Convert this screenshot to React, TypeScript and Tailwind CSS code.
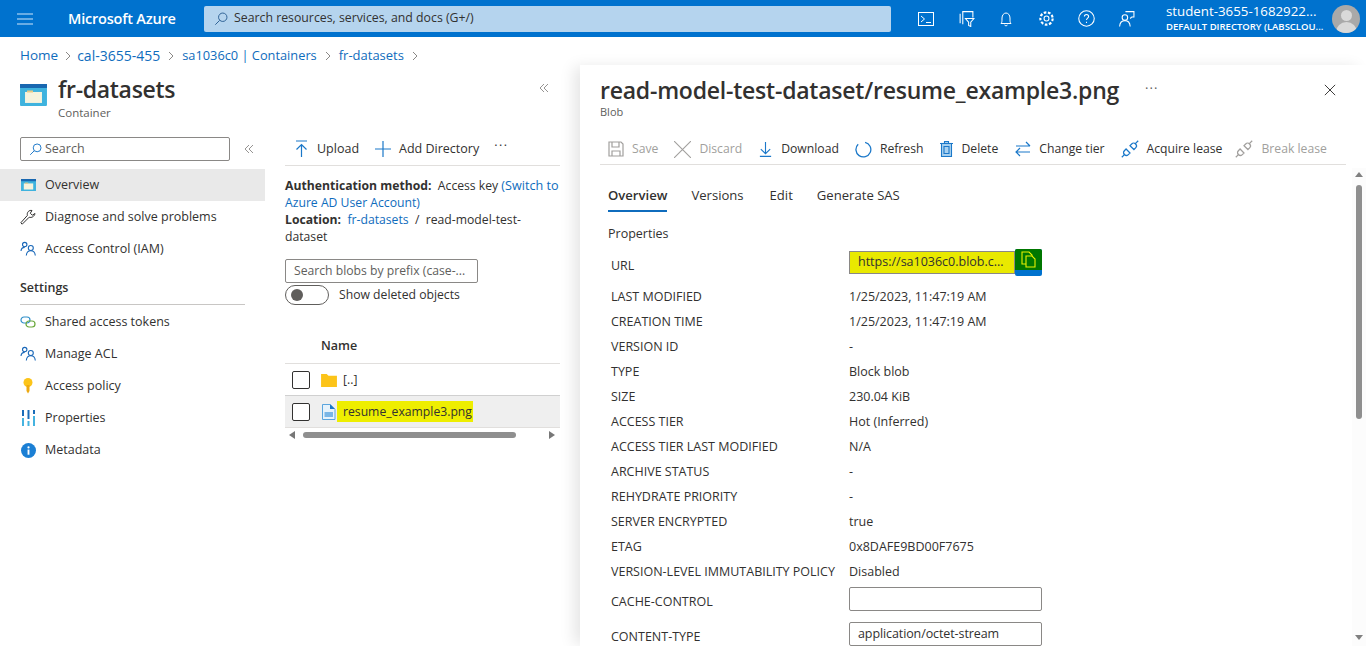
import React from "react";

const LINK = "text-[#0f6cbd]";
const font = { fontFamily: '"Open Sans", "Noto Sans", sans-serif' };

function Stroke({ size = 16, children, color = "#fff", sw = 1 }: { size?: number; children: React.ReactNode; color?: string; sw?: number }) {
  return (
    <svg width={size} height={size} viewBox="0 0 16 16" fill="none" stroke={color} strokeWidth={sw} className="shrink-0">
      {children}
    </svg>
  );
}

function ContainerIcon({ size = 16 }: { size?: number }) {
  return (
    <svg width={size} height={size * 0.85} viewBox="0 0 27 23" className="shrink-0">
      <rect x="0" y="0" width="27" height="22" rx="1" fill="#3fb3de" />
      <rect x="0" y="0" width="27" height="4" fill="#1967b0" />
      <rect x="5" y="8" width="17" height="11" fill="#f6f3dd" />
      <rect x="7" y="6.5" width="6" height="2" fill="#e9c984" />
    </svg>
  );
}

function PeopleIcon() {
  return (
    <Stroke size={16} color="#1967b8" sw={1.1}>
      <circle cx="4.7" cy="3.6" r="2.2" />
      <circle cx="10.8" cy="7" r="2.5" />
      <path d="M1 10c.2-2.2 1.6-3.6 3.7-3.6" />
      <path d="M6.3 14.5c.3-3 2-4.7 4.5-4.7s4.2 1.7 4.500 4.700" />
    </Stroke>
  );
}

function Collapse() {
  return (
    <svg width="10" height="10" viewBox="0 0 10 10" fill="none" stroke="#8a8886" strokeWidth="0.9" className="shrink-0">
      <path d="M5 1L1 5l4 4M9 1L5 5l4 4" />
    </svg>
  );
}

function NavItem({ icon, label, active }: { icon: React.ReactNode; label: string; active?: boolean }) {
  return (
    <div className={`h-8 flex items-center pl-5 gap-[9px] text-[12.5px] text-[#323130] ${active ? "bg-[#e9e9e9]" : ""}`}>
      <span className="w-4 h-4 flex items-center justify-center shrink-0">{icon}</span>
      <span>{label}</span>
    </div>
  );
}

function ToolItem({ icon, label, off, className = "" }: { icon: React.ReactNode; label: string; off?: boolean; className?: string }) {
  return (
    <div className={`flex items-center gap-2 text-[12.2px] ${off ? "text-[#a19f9d]" : "text-[#323130]"} ${className}`}>
      {icon}
      <span>{label}</span>
    </div>
  );
}

function Plug({ color }: { color: string }) {
  return (
    <Stroke size={18} color={color} sw={1.1}>
      <path d="M.7 15.300l3-3M12.300 3.700l3-3" />
      <path d="M3 9.5l1.500-1.500 3.500 3.500L6.500 13C5.500 14 4 14 3 13s-1-2.500 0-3.500z" />
      <path d="M8 5l1.500-1.500c1-1 2.500-1 3.500 0s1 2.500 0 3.500L11.500 8.500z" />
    </Stroke>
  );
}

const rows: [string, string][] = [
  ["LAST MODIFIED", "1/25/2023, 11:47:19 AM"],
  ["CREATION TIME", "1/25/2023, 11:47:19 AM"],
  ["VERSION ID", "-"],
  ["TYPE", "Block blob"],
  ["SIZE", "230.04 KiB"],
  ["ACCESS TIER", "Hot (Inferred)"],
  ["ACCESS TIER LAST MODIFIED", "N/A"],
  ["ARCHIVE STATUS", "-"],
  ["REHYDRATE PRIORITY", "-"],
  ["SERVER ENCRYPTED", "true"],
  ["ETAG", "0x8DAFE9BD00F7675"],
  ["VERSION-LEVEL IMMUTABILITY POLICY", "Disabled"],
];

function Sep({ first }: { first?: boolean }) {
  return (
    <span className={`${first ? "w-[19px]" : "w-[22px]"} flex justify-center shrink-0`}>
      <svg width="6" height="10" viewBox="0 0 6 10" fill="none" stroke="#8a8886" strokeWidth="1"><path d="M1 1l4 4-4 4" /></svg>
    </span>
  );
}

function HeadIcon({ children }: { children: React.ReactNode }) {
  return <span className="w-10 flex justify-center items-center">{children}</span>;
}

function Header() {
  return (
    <header className="h-[37px] bg-[#0072ce] flex items-center text-white shrink-0">
      <div className="w-[49px] flex justify-center">
        <svg width="16" height="12" viewBox="0 0 16 12" stroke="#cfe6fa" strokeWidth="1.2"><path d="M0 1h16M0 6h16M0 11h16" /></svg>
      </div>
      <div className="w-[155px] pl-[19px] text-[14.5px] tracking-[-0.2px] font-semibold whitespace-nowrap">Microsoft Azure</div>
      <div className="w-[687px] h-[26px] bg-[#b5d4ee] rounded-[2px] flex items-center pl-[10px] gap-[6px] text-[12.3px] text-[#323130]">
        <svg width="14" height="14" viewBox="0 0 16 16" fill="none" stroke="#2b5f93" strokeWidth="1.1"><circle cx="10" cy="6" r="4.800" /><path d="M6.500 9.500L1.500 14.500" /></svg>
        <span>Search resources, services, and docs (G+/)</span>
      </div>
      <div className="flex items-center ml-[15px]">
        <HeadIcon><Stroke size={16}><rect x="0.5" y="1.500" width="15" height="13" /><path d="M3 5l3.500 3L3 11M8 11.500h5" /></Stroke></HeadIcon>
        <HeadIcon><Stroke size={17}><path d="M4.500 13.500V1.500H14V7M2 3.500v9M7 8h8l-3 3.500V15.500l-2-1v-3z" /></Stroke></HeadIcon>
        <HeadIcon><Stroke size={16}><path d="M3 12.500c1-1 1-2 1-5.500 0-2.800 1.800-5 4-5s4 2.200 4 5c0 3.500 0 4.500 1 5.500zM6.500 14c.5 1 2.500 1 3 0" /></Stroke></HeadIcon>
        <HeadIcon><Stroke size={17}><circle cx="8" cy="8" r="2.300" /><circle cx="8" cy="8" r="5.800" strokeDasharray="2.500 1.500" strokeWidth="2" /></Stroke></HeadIcon>
        <HeadIcon><Stroke size={17}><circle cx="8" cy="8" r="7.300" /><path d="M6 6.200c0-1.200 1-2 2-2s2 .8 2 2c0 1.500-2 1.500-2 3.300M8 11v1.300" /></Stroke></HeadIcon>
        <HeadIcon><Stroke size={17}><circle cx="6.500" cy="7" r="2.600" /><path d="M1.500 15.500c.3-3.500 2.300-5.500 5-5.500s4.700 2 5 5.500M7 1.500h8v5h-2l-1.500 1.500" /></Stroke></HeadIcon>
      </div>
      <div className="ml-5 w-[166px] leading-none -mt-[1px]">
        <div className="text-[13.3px] leading-[16px] whitespace-nowrap">student-3655-1682922...</div>
        <div className="text-[9.5px] leading-[12px] font-semibold whitespace-nowrap mt-[2px]">DEFAULT DIRECTORY (LABSCLOU...</div>
      </div>
      <div className="w-7 h-7 rounded-full bg-[#a9a9a9] overflow-hidden relative shrink-0">
        <div className="w-[11px] h-[11px] rounded-full bg-[#d9d9d9] absolute left-[8.5px] top-[5px]" />
        <div className="w-[21px] h-[14px] rounded-t-full bg-[#d9d9d9] absolute left-[3.5px] top-[17px]" />
      </div>
    </header>
  );
}

function LeftNav() {
  return (
    <aside className="w-[265px] shrink-0">
      <div className="flex items-center pl-5 gap-[14px]">
        <div className="w-[210px] h-6 border border-[#8a8886] rounded-[2px] flex items-center pl-2 gap-[3px] text-[12.5px] text-[#605e5c]">
          <svg width="13" height="13" viewBox="0 0 16 16" fill="none" stroke="#1e78c8" strokeWidth="1.200"><circle cx="10" cy="6" r="4.800" /><path d="M6.500 9.500L1.500 14.500" /></svg>
          <span>Search</span>
        </div>
        <Collapse />
      </div>
      <div className="mt-2">
        <NavItem active icon={<ContainerIcon size={15} />} label="Overview" />
        <NavItem icon={<Stroke size={16} color="#323130"><path d="M.8 13.800l1.400 1.400 7-7c2.400.9 5.300-.8 5.800-3.700l-2.700 1.700-2-2L12 1.500C9 .8 6.600 3.400 7.400 6.400z" /></Stroke>} label="Diagnose and solve problems" />
        <NavItem icon={<PeopleIcon />} label="Access Control (IAM)" />
      </div>
      <div className="mt-[14px] pl-5 pr-5">
        <div className="text-[12.5px] font-semibold text-[#323130] leading-[18px] pb-[7px] border-b border-[#c8c6c4]">Settings</div>
      </div>
      <div className="mt-[1px]">
        <NavItem icon={<svg width="16" height="12" viewBox="0 0 16 12" fill="none" strokeWidth="1.200"><rect x="1" y="1" width="9" height="6" rx="3" stroke="#2f8fc9" /><rect x="6" y="5" width="9" height="6" rx="3" stroke="#6aa83a" /></svg>} label="Shared access tokens" />
        <NavItem icon={<PeopleIcon />} label="Manage ACL" />
        <NavItem icon={<svg width="10" height="16" viewBox="0 0 10 16"><circle cx="5" cy="4.500" r="4.500" fill="#fcc419" /><path d="M3.500 7h3v6L5 15.500 3.500 13z" fill="#eda911" /></svg>} label="Access policy" />
        <NavItem icon={<svg width="13" height="16" viewBox="0 0 13 16"><g fill="#1b6cb8"><rect x="0" y="0" width="2" height="6" /><rect x="5.500" y="0" width="2" height="9" /><rect x="11" y="0" width="2" height="4" /></g><g fill="#45b3e0"><rect x="0" y="8" width="2" height="8" /><rect x="5.500" y="11" width="2" height="5" /><rect x="11" y="6" width="2" height="10" /></g></svg>} label="Properties" />
        <NavItem icon={<svg width="15" height="15" viewBox="0 0 16 16"><circle cx="8" cy="8" r="8" fill="#1b7fd4" /><rect x="7" y="7" width="2" height="5.500" fill="#fff" /><circle cx="8" cy="4.700" r="1.200" fill="#fff" /></svg>} label="Metadata" />
      </div>
    </aside>
  );
}

function MiddlePane() {
  return (
    <section className="w-[295px] shrink-0 pl-5">
      <div className="h-[29px] flex items-center border-b border-[#e1dfdd] text-[12.5px] text-[#323130] pl-[9px] pb-[4px] whitespace-nowrap">
        <svg width="15" height="18" viewBox="0 0 15 18" fill="none" stroke="#1b78c9" strokeWidth="1.200" className="mr-2"><path d="M2 1h11M7.500 17V4.500M2.500 9.500l5-5 5 5" /></svg>
        <span>Upload</span>
        <svg width="16" height="16" viewBox="0 0 16 16" fill="none" stroke="#1b78c9" strokeWidth="1.200" className="ml-4 mr-2"><path d="M8 0v16M0 8h16" /></svg>
        <span>Add Directory</span>
        <span className="ml-[15px] tracking-[1.500px] text-[#323130] -mt-[5px]">···</span>
      </div>
      <div className="mt-[11px] text-[12.2px] leading-[17px] text-[#323130] whitespace-nowrap">
        <div><span className="font-bold">Authentication method:</span>&nbsp; Access key <span className={`${LINK} text-[12.6px]`}>(Switch to</span></div>
        <div className={LINK}>Azure AD User Account)</div>
        <div><span className="font-bold">Location:</span>&nbsp; <span className={LINK}>fr-datasets</span>&nbsp; /&nbsp; read-model-test-</div>
        <div>dataset</div>
      </div>
      <div className="mt-[14px] w-[193px] h-6 border border-[#8a8886] rounded-[2px] flex items-center pl-2 text-[12.2px] text-[#605e5c] whitespace-nowrap">Search blobs by prefix (case-...</div>
      <div className="flex items-center mt-[2px] text-[12.2px] text-[#323130]">
        <div className="w-[44px] h-5 rounded-full border border-[#605e5c] flex items-center pl-[5px]">
          <div className="w-[12px] h-[12px] rounded-full bg-[#605e5c]" />
        </div>
        <span className="ml-[10px]">Show deleted objects</span>
      </div>
      <div className="mt-6 h-[35px] flex items-center border-b border-[#e1dfdd] pl-[36px] pt-[1px] text-[12.5px] font-semibold text-[#323130]">Name</div>
      <div className="h-8 flex items-center border-b border-[#d0d0d0] pl-[7px] text-[12.2px] text-[#323130]">
        <div className="w-[18px] h-[18px] border border-[#323130] rounded-[2px] mr-[11px]" />
        <svg width="16" height="14" viewBox="0 0 17 15" className="mr-[6px]"><path d="M0 1h6l2 2h9v12H0z" fill="#fcc419" /></svg>
        <span className="pt-[1px]">[..]</span>
      </div>
      <div className="h-8 flex items-center bg-[#efefef] border-b border-[#e1dfdd] pl-[7px] text-[12.2px] text-[#323130]">
        <div className="w-[18px] h-[18px] border border-[#323130] bg-white rounded-[2px] mr-[11px]" />
        <svg width="15" height="16" viewBox="0 0 15 16" className="shrink-0 mr-[1px]"><path d="M1.500.5h7.500l5 5v10H1.500z" fill="#e6f2fb" stroke="#5aa5de" /><path d="M9 0l5 5H9z" fill="#1b78c9" /><rect x="3.500" y="8" width="8.500" height="5" fill="#7ab6e6" /></svg>
        <span className="bg-[#eeee00] pl-[6px] pr-[1px] h-[21px] flex items-center pt-[1px]">resume_example3.png</span>
      </div>
      <div className="h-[13px] flex items-center pl-[4px]">
        <span className="w-0 h-0 border-y-[4px] border-y-transparent border-r-[6px] border-r-[#777]" />
        <div className="w-[213px] h-[6px] rounded-full bg-[#8f8f8f] ml-2" />
        <span className="w-0 h-0 border-y-[4px] border-y-transparent border-l-[6px] border-l-[#777] ml-[33px]" />
      </div>
    </section>
  );
}

function Blade() {
  return (
    <main className="flex-1 min-w-0 bg-white relative shadow-[-8px_0_14px_-2px_rgba(0,0,0,0.1)] pl-5 overflow-hidden">
      <div className="flex items-center h-[48px] pr-[30px] pt-[2px]">
        <h2 className="text-[23px] font-semibold text-[#323130] whitespace-nowrap tracking-[-0.22px]">read-model-test-dataset/resume_example3.png</h2>
        <span className="ml-[26px] text-[#605e5c] tracking-[1px] text-[13px] -mt-[2px]">···</span>
        <div className="flex-1" />
        <svg width="12" height="12" viewBox="0 0 14 14" stroke="#323130" strokeWidth="1.1"><path d="M1 1l12 12M13 1L1 13" /></svg>
      </div>
      <div className="text-[11px] text-[#605e5c] leading-[14px] -mt-[8px]">Blob</div>
      <div className="mt-[7px] mr-5 h-[39px] border-b border-[#e1dfdd] flex items-center pl-2 gap-4 pt-[9px] whitespace-nowrap">
        <ToolItem off label="Save" icon={<Stroke size={16} color="#a19f9d" sw={1.2}><path d="M1 1h12l2 2v12H1zM4 1v5h7V1M4 15v-5h8v5" /></Stroke>} />
        <ToolItem off label="Discard" icon={<Stroke size={17} color="#a19f9d"><path d="M0 0l16 16M16 0L0 16" /></Stroke>} />
        <ToolItem label="Download" icon={<Stroke size={15} color="#1b78c9" sw={1.2}><path d="M8 0v12M3 7.500l5 5 5-5M2 15.300h12" /></Stroke>} />
        <ToolItem label="Refresh" icon={<Stroke size={17} color="#1b78c9" sw={1.2}><path d="M9.500 1.200A7 7 0 1 1 3 3" /></Stroke>} />
        <ToolItem label="Delete" className="ml-[1px]" icon={<svg width="13" height="16" viewBox="0 0 13 16" fill="#a8d1f0" stroke="#1b78c9" strokeWidth="1.100"><rect x="1.500" y="2.500" width="10" height="13" /><path d="M0 2.500h13M4.500 2.500V.5h4v2M4 5.500v7h5v-7z" /></svg>} />
        <ToolItem label="Change tier" className="ml-[1px]" icon={<Stroke size={16} color="#1b78c9" sw={1.2}><path d="M1 5h14M11 1l4 4M15 11H1M5 7l-4 4 4 4" /></Stroke>} />
        <ToolItem label="Acquire lease" icon={<Plug color="#1b78c9" />} />
        <ToolItem off label="Break lease" className="-ml-[3px]" icon={<Plug color="#a19f9d" />} />
      </div>
      <div className="flex items-start pl-2 gap-6 mt-[21px] text-[13.1px] text-[#323130] h-[26px] leading-[18px]">
        <span className="font-semibold h-[26px] border-b-2 border-[#0f6cbd]">Overview</span>
        <span>Versions</span>
        <span className="ml-[2px]">Edit</span>
        <span>Generate SAS</span>
      </div>
      <div className="pl-2 mt-[13px] text-[12.5px] text-[#323130] leading-[18px]">Properties</div>
      <div className="pl-[11px] text-[12.5px] text-[#323130] mt-2">
        <div className="flex items-center h-[30px]">
          <span className="w-[238px]">URL</span>
          <div className="h-[23px] w-[166px] bg-[#e9e900] border border-[#8a8886] flex items-center pl-2 -mt-[8px] whitespace-nowrap">https://sa1036c0.blob.c...</div>
          <div className="w-[27px] h-[27px] bg-[#0072ce] rounded-[2px] -mt-[7px] overflow-hidden">
            <div className="h-[21px] bg-[#007700] flex items-center justify-center">
              <svg width="16" height="17" viewBox="0 0 16 17" fill="none" stroke="#e9f200" strokeWidth="1.100"><path d="M1 1h7l3 3v9H1z" /><path d="M5 5h6l3 3v8H5z" fill="#007700" /></svg>
            </div>
          </div>
        </div>
        <div className="mt-1">
          {rows.map(([k, v]) => (
            <div key={k} className="flex items-center h-[25px]">
              <span className="w-[238px] whitespace-nowrap">{k}</span>
              <span>{v}</span>
            </div>
          ))}
          <div className="flex items-center h-6 mt-[2px]">
            <span className="w-[238px] pt-[6px]">CACHE-CONTROL</span>
            <div className="w-[193px] h-6 border border-[#8a8886] rounded-[2px]" />
          </div>
          <div className="flex items-center h-6 mt-[11px]">
            <span className="w-[238px] pt-[6px]">CONTENT-TYPE</span>
            <div className="w-[193px] h-6 border border-[#8a8886] rounded-[2px] flex items-center pl-2 tracking-[-0.1px]">application/octet-stream</div>
          </div>
        </div>
      </div>
      <div className="absolute right-0 top-[103px] bottom-0 w-[14px] bg-[#fcfcfc] flex flex-col items-center pt-[4px] pb-[6px]">
        <span className="w-0 h-0 border-x-[4px] border-x-transparent border-b-[5px] border-b-[#808080]" />
        <div className="w-[6px] h-[234px] rounded-full bg-[#8f8f8f] mt-[8px]" />
        <div className="flex-1" />
        <span className="w-0 h-0 border-x-[4px] border-x-transparent border-t-[5px] border-t-[#808080]" />
      </div>
    </main>
  );
}

export default function App() {
  return (
    <div className="w-[1366px] h-[646px] overflow-hidden bg-white flex flex-col" style={font}>
      <Header />
      <div className="flex-1 flex min-h-0">
        <div className="w-[580px] shrink-0">
          <nav className="h-[37px] pl-5 flex items-center text-[13.5px] whitespace-nowrap">
            <span className={LINK}>Home</span><Sep first />
            <span className={`${LINK} text-[14px]`}>cal-3655-455</span><Sep />
            <span className={`${LINK} text-[12.8px]`}>sa1036c0 | Containers</span><Sep />
            <span className={`${LINK} text-[13px]`}>fr-datasets</span><Sep />
          </nav>
          <div className="flex pl-5 h-[63px]">
            <div className="mt-[10px] mr-[11px]"><ContainerIcon size={27} /></div>
            <div className="flex-1">
              <div className="text-[23px] font-semibold text-[#323130] tracking-[-0.3px] leading-[30px]">fr-datasets</div>
              <div className="text-[11.5px] text-[#605e5c] leading-[16px] mt-[1px]">Container</div>
            </div>
            <div className="mr-[31px] mt-[9px]"><Collapse /></div>
          </div>
          <div className="flex">
            <LeftNav />
            <MiddlePane />
          </div>
        </div>
        <div className="flex-1 min-w-0 flex flex-col pt-7">
          <Blade />
        </div>
      </div>
    </div>
  );
}
